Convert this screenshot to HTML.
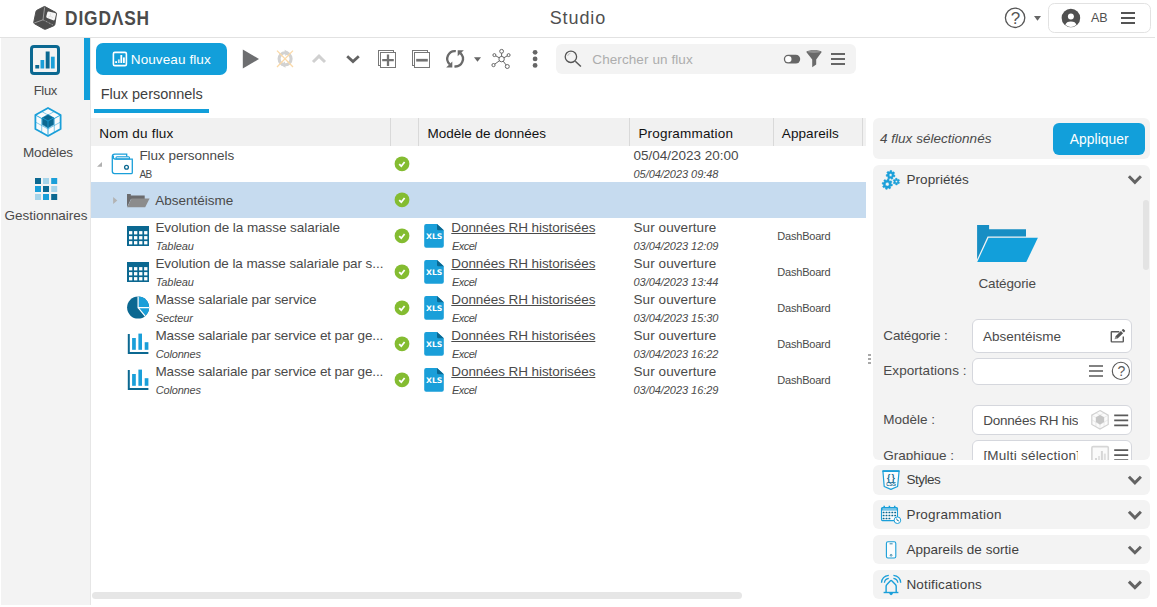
<!DOCTYPE html>
<html lang="fr"><head><meta charset="utf-8"><title>Studio</title>
<style>
*{box-sizing:border-box;margin:0;padding:0}
html,body{width:1157px;height:607px;overflow:hidden;background:#fff}
body{font-family:"Liberation Sans",sans-serif;color:#4a4a4a;font-size:13.5px;position:relative}
.abs{position:absolute}
.t,.s{position:absolute;white-space:nowrap;line-height:1;color:#4a4a4a}
.s{font-style:italic}
#topline{left:0;top:37px;width:1155px;height:1px;background:#e2e2e2}
#userbox{left:1048.4px;top:3.2px;width:102.2px;height:29.8px;border:1px solid #e2e2e2;border-radius:6.5px}
#side{left:1px;top:38px;width:90px;height:566.6px;background:#f3f3f3;border-right:1px solid #e6e6e6}
#activebar{left:84px;top:38px;width:6px;height:62px;background:#129fda}
#newbtn{left:96px;top:43px;width:131px;height:32px;border-radius:7px;background:#129fda}
#search{left:556px;top:44px;width:300px;height:30px;border-radius:6px;background:#f3f3f3}
#tabline{left:94px;top:109px;width:115px;height:4px;background:#129fda}
#thead{left:91px;top:118px;width:775px;height:28px;background:#f1f1f1}
.sep{position:absolute;top:0;width:1px;height:28px;background:#d9d9d9}
#selrow{left:91px;top:181.6px;width:775px;height:36px;background:#c6dbef}
.box{position:absolute;left:873px;width:277px;background:#f3f3f3;border-radius:6px}
#apply{left:1053px;top:123px;width:92px;height:32px;border-radius:6px;background:#129fda}
.inp{position:absolute;left:972px;width:160px;background:#fff;border:1px solid #d5d7dd;border-radius:6px}
#hscroll{left:92px;top:592px;width:649.5px;height:7.4px;border-radius:4px;background:#e6e6e6}
#vscroll{left:1143px;top:200px;width:6px;height:70px;border-radius:3px;background:#e3e3e3}
svg{position:absolute;overflow:visible}
</style></head><body>
<!-- TOP BAR -->
<div class="t" style="left:65.2px;top:7.00px;font-size:21px;letter-spacing:1.05px;font-weight:bold;color:#4b4b4b;transform-origin:0 50%;transform:scaleX(.825);">DIGDΛSH</div>
<div class="t" style="left:549.7px;top:9.00px;font-size:18px;letter-spacing:0.89px;color:#4f4f4f;">Studio</div>
<div class="t" style="left:1091px;top:12.00px;font-size:12.5px;color:#4f4f4f;">AB</div>
<div class="abs" id="topline"></div>
<div class="abs" id="userbox"></div>
<!-- SIDEBAR -->
<div class="abs" id="side"></div><div class="abs" id="activebar"></div>
<div class="t" style="left:33.7px;top:84.00px;font-size:13px;letter-spacing:-0.32px;">Flux</div>
<div class="t" style="left:23px;top:146.00px;font-size:13.5px;letter-spacing:-0.17px;">Modèles</div>
<div class="t" style="left:4.5px;top:209.00px;font-size:13.5px;letter-spacing:-0.02px;">Gestionnaires</div>
<!-- TOOLBAR -->
<div class="abs" id="newbtn"></div>
<div class="t" style="left:130.8px;top:53.00px;font-size:13.5px;letter-spacing:0.1px;color:#fff;">Nouveau flux</div>
<div class="abs" id="search"></div>
<div class="t" style="left:592.3px;top:53.00px;font-size:13.5px;letter-spacing:0.09px;color:#adadad;">Chercher un flux</div>
<div class="t" style="left:100.8px;top:87.00px;font-size:14.5px;letter-spacing:-0.03px;color:#3f3f3f;">Flux personnels</div>
<div class="abs" id="tabline"></div>
<!-- TABLE -->
<div class="abs" id="thead"><div class="sep" style="left:299px"></div><div class="sep" style="left:327px"></div><div class="sep" style="left:538px"></div><div class="sep" style="left:682px"></div><div class="sep" style="left:771px"></div></div>
<div class="t" style="left:99.3px;top:127.00px;font-size:13.5px;letter-spacing:0.2px;color:#111;">Nom du flux</div>
<div class="t" style="left:427.5px;top:127.00px;font-size:13.5px;color:#111;">Modèle de données</div>
<div class="t" style="left:638.4px;top:127.00px;font-size:13.5px;letter-spacing:0.19px;color:#111;">Programmation</div>
<div class="t" style="left:781.8px;top:127.00px;font-size:13.5px;letter-spacing:0.08px;color:#111;">Appareils</div>
<div class="abs" id="selrow"></div>
<div class="t" style="left:139.4px;top:149.00px;font-size:13.5px;letter-spacing:-0.04px;">Flux personnels</div>
<div class="t" style="left:139.4px;top:170.00px;font-size:10px;letter-spacing:-0.44px;">AB</div>
<div class="t" style="left:633.5px;top:149.00px;font-size:13.5px;letter-spacing:-0.01px;">05/04/2023 20:00</div>
<div class="s" style="left:633.5px;top:169.00px;font-size:11px;letter-spacing:-0.05px;">05/04/2023 09:48</div>
<div class="t" style="left:155.3px;top:194.00px;font-size:13.5px;letter-spacing:-0.01px;">Absentéisme</div>
<div class="t" style="left:155.4px;top:221.00px;font-size:13.5px;letter-spacing:-0.05px;">Evolution de la masse salariale</div>
<div class="s" style="left:155.7px;top:241.00px;font-size:11px;letter-spacing:-0.08px;">Tableau</div>
<div class="t" style="left:451.3px;top:221.00px;font-size:13.5px;letter-spacing:-0.07px;text-decoration:underline;">Données RH historisées</div>
<div class="s" style="left:452px;top:241.00px;font-size:11px;letter-spacing:-0.53px;">Excel</div>
<div class="t" style="left:633.5px;top:221.00px;font-size:13.5px;letter-spacing:0.08px;">Sur ouverture</div>
<div class="s" style="left:633.5px;top:241.00px;font-size:11px;letter-spacing:-0.05px;">03/04/2023 12:09</div>
<div class="t" style="left:777.3px;top:231.00px;font-size:11px;letter-spacing:-0.21px;">DashBoard</div>
<div class="t" style="left:155.4px;top:257.00px;font-size:13.5px;letter-spacing:-0.08px;">Evolution de la masse salariale par s...</div>
<div class="s" style="left:155.7px;top:277.00px;font-size:11px;letter-spacing:-0.08px;">Tableau</div>
<div class="t" style="left:451.3px;top:257.00px;font-size:13.5px;letter-spacing:-0.07px;text-decoration:underline;">Données RH historisées</div>
<div class="s" style="left:452px;top:277.00px;font-size:11px;letter-spacing:-0.53px;">Excel</div>
<div class="t" style="left:633.5px;top:257.00px;font-size:13.5px;letter-spacing:0.08px;">Sur ouverture</div>
<div class="s" style="left:633.5px;top:277.00px;font-size:11px;letter-spacing:-0.05px;">03/04/2023 13:44</div>
<div class="t" style="left:777.3px;top:267.00px;font-size:11px;letter-spacing:-0.21px;">DashBoard</div>
<div class="t" style="left:155.4px;top:293.00px;font-size:13.5px;letter-spacing:-0.09px;">Masse salariale par service</div>
<div class="s" style="left:155.7px;top:313.00px;font-size:11px;letter-spacing:-0.1px;">Secteur</div>
<div class="t" style="left:451.3px;top:293.00px;font-size:13.5px;letter-spacing:-0.07px;text-decoration:underline;">Données RH historisées</div>
<div class="s" style="left:452px;top:313.00px;font-size:11px;letter-spacing:-0.53px;">Excel</div>
<div class="t" style="left:633.5px;top:293.00px;font-size:13.5px;letter-spacing:0.08px;">Sur ouverture</div>
<div class="s" style="left:633.5px;top:313.00px;font-size:11px;letter-spacing:-0.05px;">03/04/2023 15:30</div>
<div class="t" style="left:777.3px;top:303.00px;font-size:11px;letter-spacing:-0.21px;">DashBoard</div>
<div class="t" style="left:155.4px;top:329.00px;font-size:13.5px;letter-spacing:-0.1px;">Masse salariale par service et par ge...</div>
<div class="s" style="left:155.7px;top:349.00px;font-size:11px;letter-spacing:-0.17px;">Colonnes</div>
<div class="t" style="left:451.3px;top:329.00px;font-size:13.5px;letter-spacing:-0.07px;text-decoration:underline;">Données RH historisées</div>
<div class="s" style="left:452px;top:349.00px;font-size:11px;letter-spacing:-0.53px;">Excel</div>
<div class="t" style="left:633.5px;top:329.00px;font-size:13.5px;letter-spacing:0.08px;">Sur ouverture</div>
<div class="s" style="left:633.5px;top:349.00px;font-size:11px;letter-spacing:-0.05px;">03/04/2023 16:22</div>
<div class="t" style="left:777.3px;top:339.00px;font-size:11px;letter-spacing:-0.21px;">DashBoard</div>
<div class="t" style="left:155.4px;top:365.00px;font-size:13.5px;letter-spacing:-0.1px;">Masse salariale par service et par ge...</div>
<div class="s" style="left:155.7px;top:385.00px;font-size:11px;letter-spacing:-0.17px;">Colonnes</div>
<div class="t" style="left:451.3px;top:365.00px;font-size:13.5px;letter-spacing:-0.07px;text-decoration:underline;">Données RH historisées</div>
<div class="s" style="left:452px;top:385.00px;font-size:11px;letter-spacing:-0.53px;">Excel</div>
<div class="t" style="left:633.5px;top:365.00px;font-size:13.5px;letter-spacing:0.08px;">Sur ouverture</div>
<div class="s" style="left:633.5px;top:385.00px;font-size:11px;letter-spacing:-0.05px;">03/04/2023 16:29</div>
<div class="t" style="left:777.3px;top:375.00px;font-size:11px;letter-spacing:-0.21px;">DashBoard</div>
<!-- RIGHT PANEL -->
<div class="box" style="top:118.2px;height:41.3px"></div>
<div class="t" style="left:880px;top:132.00px;font-size:13.5px;letter-spacing:0.02px;font-style:italic;">4 flux sélectionnés</div>
<div class="abs" id="apply"></div>
<div class="t" style="left:1069.7px;top:133.00px;font-size:13.8px;letter-spacing:0.09px;color:#fff;">Appliquer</div>
<div class="box" style="top:165.2px;height:294.6px"></div>
<div class="abs" id="vscroll"></div>
<div class="t" style="left:906.4px;top:173.00px;font-size:13.5px;letter-spacing:0.1px;color:#3f3f3f;">Propriétés</div>
<div class="t" style="left:978.5px;top:277.00px;font-size:13.5px;letter-spacing:-0.13px;">Catégorie</div>
<div class="inp" style="top:319px;height:34px"></div>
<div class="inp" style="top:358px;height:27px"></div>
<div class="inp" style="top:405px;height:30px"></div>
<div class="abs" style="left:972px;top:440px;width:160px;height:19.8px;overflow:hidden"><div class="inp" style="left:0;top:0.4px;height:30px"></div></div>
<div class="t" style="left:883.3px;top:329.00px;font-size:13.5px;letter-spacing:-0.16px;">Catégorie :</div>
<div class="t" style="left:883.3px;top:364.00px;font-size:13.5px;letter-spacing:0.05px;">Exportations :</div>
<div class="t" style="left:883.3px;top:413.00px;font-size:13.5px;">Modèle :</div>
<div class="abs" style="left:873px;top:440px;width:277px;height:19.8px;overflow:hidden"><div class="t" style="left:10.3px;top:9.00px;font-size:13.5px;letter-spacing:0.01px;">Graphique :</div></div>
<div class="abs" style="left:980px;top:440px;width:98.4px;height:19.8px;overflow:hidden"><div class="t" style="left:3.4px;top:9.00px;font-size:13.5px;letter-spacing:0.22px;">[Multi sélection]</div></div>
<div class="t" style="left:983px;top:330.00px;font-size:13.5px;letter-spacing:-0.01px;">Absentéisme</div>
<div class="abs" style="left:980px;top:406px;width:98.4px;height:28px;overflow:hidden"><div class="t" style="left:3.3px;top:8.00px;font-size:13.5px;letter-spacing:-0.24px;">Données RH historisées</div></div>
<div class="box" style="top:465.2px;height:29.4px"></div>
<div class="t" style="left:906.4px;top:473.00px;font-size:13.5px;letter-spacing:-0.49px;color:#3f3f3f;">Styles</div>
<div class="box" style="top:500.1px;height:29.4px"></div>
<div class="t" style="left:906.4px;top:508.00px;font-size:13.5px;letter-spacing:0.23px;color:#3f3f3f;">Programmation</div>
<div class="box" style="top:535px;height:29.4px"></div>
<div class="t" style="left:906.4px;top:543.00px;font-size:13.5px;letter-spacing:0.04px;color:#3f3f3f;">Appareils de sortie</div>
<div class="box" style="top:569.9px;height:29.4px"></div>
<div class="t" style="left:906.4px;top:578.00px;font-size:13.5px;letter-spacing:0.16px;color:#3f3f3f;">Notifications</div>
<div class="abs" id="hscroll"></div>
<div class="abs" style="left:868.4px;top:353.9px;width:2.2px;height:2.1px;background:#a8a8a8;box-shadow:0 4px 0 #a8a8a8,0 8px 0 #a8a8a8"></div>
<svg style="left:92px;top:146px" width="780" height="260" viewBox="92 146 780 260"><path d="M97 166.8 H102 V162Z" fill="#b0b0b0"/><path d="M116 159 V157.7 Q116 156.7 117 156.7 H128.5 Q129.5 156.7 129.5 157.7 V159Z" fill="#bfe2f4" stroke="#1a9fd9" stroke-width="1.1"/><path d="M116.6 157.3 H128.9" stroke="#fff" stroke-width=".5" opacity=".6"/><path d="M132.3 159.2 V172.4 Q132.3 173.6 131.1 173.6 H114.6 Q112.3 173.6 112.3 171.3 V156.7 Q112.3 154.2 114.8 154.2 H126.7 V156.4" fill="none" stroke="#1a9fd9" stroke-width="1.3"/><path d="M113.5 155.6 Q112.7 158.9 115.2 159.2 H132.9" fill="none" stroke="#1a9fd9" stroke-width="1.3"/><circle cx="126.5" cy="167.2" r="1.9" fill="#fff" stroke="#0b6891" stroke-width="1.3"/><path d="M113.1 197 V203.9 L117.3 200.4Z" fill="#b3b3b3"/><path d="M127 193.9 H130.8 V195.5 H144.7 V199 H131 L127 207.3Z" fill="#6b6b6d"/><path d="M131.5 198.6 H149.6 L145.2 207.3 H127.2Z" fill="#8c8c8c"/><circle cx="402" cy="163.8" r="7.4" fill="#84bc31"/><path d="M399.2 164.1 L401.3 166.2 L404.6 162.0" fill="none" stroke="#fff" stroke-width="1.8"/><circle cx="402" cy="199.8" r="7.4" fill="#84bc31"/><path d="M399.2 200.1 L401.3 202.2 L404.6 198.0" fill="none" stroke="#fff" stroke-width="1.8"/><circle cx="402" cy="235.8" r="7.4" fill="#84bc31"/><path d="M399.2 236.1 L401.3 238.2 L404.6 234.0" fill="none" stroke="#fff" stroke-width="1.8"/><path d="M426.2 224.1 H437 L443.8 230.29999999999998 V245.79999999999998 Q443.8 247.79999999999998 441.8 247.79999999999998 H426.2 Q424.2 247.79999999999998 424.2 245.79999999999998 V226.1 Q424.2 224.1 426.2 224.1Z" fill="#1a9fd9"/><path d="M437 224.1 L443.8 230.29999999999998 H438.4 Q437 230.29999999999998 437 228.9Z" fill="#0b6891"/><text x="434.2" y="239.2" text-anchor="middle" font-family="DejaVu Sans, Liberation Sans, sans-serif" font-weight="bold" font-size="7.7" fill="#fff">XLS</text><rect x="127" y="226" width="22" height="20" fill="#0b6891"/><rect x="129.0" y="231.1" width="3.3" height="3.3" fill="#fff"/><rect x="134.0" y="231.1" width="3.3" height="3.3" fill="#fff"/><rect x="139.1" y="231.1" width="3.3" height="3.3" fill="#fff"/><rect x="144.1" y="231.1" width="3.3" height="3.3" fill="#fff"/><rect x="129.0" y="236.1" width="3.3" height="3.3" fill="#fff"/><rect x="134.0" y="236.1" width="3.3" height="3.3" fill="#fff"/><rect x="139.1" y="236.1" width="3.3" height="3.3" fill="#fff"/><rect x="144.1" y="236.1" width="3.3" height="3.3" fill="#fff"/><rect x="129.0" y="241.1" width="3.3" height="3.3" fill="#fff"/><rect x="134.0" y="241.1" width="3.3" height="3.3" fill="#fff"/><rect x="139.1" y="241.1" width="3.3" height="3.3" fill="#fff"/><rect x="144.1" y="241.1" width="3.3" height="3.3" fill="#fff"/><circle cx="402" cy="271.8" r="7.4" fill="#84bc31"/><path d="M399.2 272.1 L401.3 274.2 L404.6 270.0" fill="none" stroke="#fff" stroke-width="1.8"/><path d="M426.2 260.1 H437 L443.8 266.3 V281.8 Q443.8 283.8 441.8 283.8 H426.2 Q424.2 283.8 424.2 281.8 V262.1 Q424.2 260.1 426.2 260.1Z" fill="#1a9fd9"/><path d="M437 260.1 L443.8 266.3 H438.4 Q437 266.3 437 264.9Z" fill="#0b6891"/><text x="434.2" y="275.2" text-anchor="middle" font-family="DejaVu Sans, Liberation Sans, sans-serif" font-weight="bold" font-size="7.7" fill="#fff">XLS</text><rect x="127" y="262" width="22" height="20" fill="#0b6891"/><rect x="129.0" y="267.1" width="3.3" height="3.3" fill="#fff"/><rect x="134.0" y="267.1" width="3.3" height="3.3" fill="#fff"/><rect x="139.1" y="267.1" width="3.3" height="3.3" fill="#fff"/><rect x="144.1" y="267.1" width="3.3" height="3.3" fill="#fff"/><rect x="129.0" y="272.1" width="3.3" height="3.3" fill="#fff"/><rect x="134.0" y="272.1" width="3.3" height="3.3" fill="#fff"/><rect x="139.1" y="272.1" width="3.3" height="3.3" fill="#fff"/><rect x="144.1" y="272.1" width="3.3" height="3.3" fill="#fff"/><rect x="129.0" y="277.1" width="3.3" height="3.3" fill="#fff"/><rect x="134.0" y="277.1" width="3.3" height="3.3" fill="#fff"/><rect x="139.1" y="277.1" width="3.3" height="3.3" fill="#fff"/><rect x="144.1" y="277.1" width="3.3" height="3.3" fill="#fff"/><circle cx="402" cy="307.8" r="7.4" fill="#84bc31"/><path d="M399.2 308.1 L401.3 310.2 L404.6 306.0" fill="none" stroke="#fff" stroke-width="1.8"/><path d="M426.2 296.1 H437 L443.8 302.3 V317.8 Q443.8 319.8 441.8 319.8 H426.2 Q424.2 319.8 424.2 317.8 V298.1 Q424.2 296.1 426.2 296.1Z" fill="#1a9fd9"/><path d="M437 296.1 L443.8 302.3 H438.4 Q437 302.3 437 300.90000000000003Z" fill="#0b6891"/><text x="434.2" y="311.2" text-anchor="middle" font-family="DejaVu Sans, Liberation Sans, sans-serif" font-weight="bold" font-size="7.7" fill="#fff">XLS</text><circle cx="138.1" cy="307.6" r="11" fill="#0b6891"/><path d="M138.1 307.6 V296.6 A11 11 0 0 1 145.17 316.03Z" fill="#1a9fd9"/><path d="M138.1 296.6 V307.6 H149.1 M138.1 307.6 L145.17 316.03" stroke="#fff" stroke-width="1.2" fill="none"/><circle cx="402" cy="343.8" r="7.4" fill="#84bc31"/><path d="M399.2 344.1 L401.3 346.2 L404.6 342.0" fill="none" stroke="#fff" stroke-width="1.8"/><path d="M426.2 332.1 H437 L443.8 338.3 V353.8 Q443.8 355.8 441.8 355.8 H426.2 Q424.2 355.8 424.2 353.8 V334.1 Q424.2 332.1 426.2 332.1Z" fill="#1a9fd9"/><path d="M437 332.1 L443.8 338.3 H438.4 Q437 338.3 437 336.90000000000003Z" fill="#0b6891"/><text x="434.2" y="347.2" text-anchor="middle" font-family="DejaVu Sans, Liberation Sans, sans-serif" font-weight="bold" font-size="7.7" fill="#fff">XLS</text><path d="M128.8 334 V353 H148.4" fill="none" stroke="#0b6891" stroke-width="2"/><rect x="132.1" y="338" width="3.7" height="11.8" fill="#1a9fd9"/><rect x="138.4" y="333.6" width="3.6" height="16.2" fill="#1a9fd9"/><rect x="144.7" y="342.2" width="3.7" height="7.6" fill="#1a9fd9"/><circle cx="402" cy="379.8" r="7.4" fill="#84bc31"/><path d="M399.2 380.1 L401.3 382.2 L404.6 378.0" fill="none" stroke="#fff" stroke-width="1.8"/><path d="M426.2 368.1 H437 L443.8 374.3 V389.8 Q443.8 391.8 441.8 391.8 H426.2 Q424.2 391.8 424.2 389.8 V370.1 Q424.2 368.1 426.2 368.1Z" fill="#1a9fd9"/><path d="M437 368.1 L443.8 374.3 H438.4 Q437 374.3 437 372.90000000000003Z" fill="#0b6891"/><text x="434.2" y="383.2" text-anchor="middle" font-family="DejaVu Sans, Liberation Sans, sans-serif" font-weight="bold" font-size="7.7" fill="#fff">XLS</text><path d="M128.8 370 V389 H148.4" fill="none" stroke="#0b6891" stroke-width="2"/><rect x="132.1" y="374" width="3.7" height="11.8" fill="#1a9fd9"/><rect x="138.4" y="369.6" width="3.6" height="16.2" fill="#1a9fd9"/><rect x="144.7" y="378.2" width="3.7" height="7.6" fill="#1a9fd9"/></svg>
<!-- ICONS: top bar -->
<svg style="left:0;top:0" width="160" height="37" viewBox="0 0 160 37">
 <path d="M44.9 6.2 L56.3 12.4 Q57 12.9 56.8 13.8 L55.2 24.6 Q55 25.5 54.3 25.9 L45.8 29.5 Q44.9 29.8 44 29.4 L34 23.8 Q33.2 23.2 33.4 22.3 L35.7 11.2 Q35.9 10.4 36.7 10 L43.9 6.3 Q44.4 6 44.9 6.2Z" fill="#4d4d4d" stroke="#4d4d4d" stroke-width="1" stroke-linejoin="round" transform="translate(45 18) scale(.97) translate(-45 -18)"/>
 <path d="M48.8 11.5 L55 12.9 Q56.3 13.3 56 14.6 L54.8 19.4 Q54.4 20.7 53.1 20.3 L47.2 18 Q45.9 17.5 46.3 16.2 L47.3 12.6 Q47.6 11.3 48.8 11.5Z" fill="#f6f6f6"/>
 <path d="M44.6 7.4 L43 19.8 L34.2 23" fill="none" stroke="#bdbdbd" stroke-width=".7"/>
 <path d="M43 19.8 L53 25" fill="none" stroke="#bdbdbd" stroke-width=".8" stroke-dasharray="1 .7"/>
 <path d="M50.5 13.2 L50.2 16.2 L48 17.3 M50.2 16.2 L53 17.6" fill="none" stroke="#cfcfcf" stroke-width=".5"/>
</svg>
<!-- help / user -->
<svg style="left:1000px;top:0" width="157" height="37" viewBox="1000 0 157 37">
 <circle cx="1015.1" cy="17.8" r="9.7" fill="none" stroke="#555" stroke-width="1.3"/>
 <path d="M1034 16 H1041 L1037.5 20.7Z" fill="#666"/>
 <circle cx="1070.9" cy="18" r="9.3" fill="#505050"/>
 <circle cx="1070.9" cy="16.6" r="3" fill="#fff"/>
 <path d="M1065.4 24.8 Q1066.2 21.4 1070.9 21.4 Q1075.6 21.4 1076.4 24.8 Q1074 27 1070.9 27 Q1067.8 27 1065.4 24.8Z" fill="#fff"/>
 <path d="M1121 13 h14 M1121 18 h14 M1121 23 h14" stroke="#545454" stroke-width="2"/>
</svg>
<!-- sidebar icons -->
<svg style="left:0;top:38px" width="92" height="170" viewBox="0 38 92 170">
 <rect x="31.5" y="46.5" width="27" height="27" rx="2.5" fill="none" stroke="#0b6891" stroke-width="3"/>
 <rect x="35.3" y="65" width="3.9" height="3.5" fill="#0b6891"/>
 <rect x="40.5" y="60" width="3.7" height="8.5" fill="#1a9fd9"/>
 <rect x="45.7" y="51.5" width="3.9" height="17" fill="#0b6891"/>
 <rect x="50.9" y="56.7" width="3.8" height="11.8" fill="#1a9fd9"/>
 <!-- modeles cube -->
 <g stroke="#1a9fd9" fill="none">
  <path d="M48 108 L60.6 115 V129 L48 136 L35.4 129 V115Z" fill="#f9fafb" stroke-width="1.8" stroke-linejoin="round"/>
  <path d="M48 122 V136 M35.4 115 L48 122 L60.6 115" stroke-width=".9"/>
  <path d="M41.7 111.5 L54.3 118.5 V132.5 M54.3 111.5 L41.7 118.5 V132.5 M35.4 122 L48 129 L60.6 122" stroke-width=".7" opacity=".75"/>
 </g>
 <path d="M48 114.6 L53.8 117.8 V124.6 L48 128 L42.2 124.6 V117.8Z" fill="#0b6891"/>
 <path d="M42.2 117.8 L48 121 L53.8 117.8 M48 121 V128" stroke="#1a9fd9" stroke-width=".8" fill="none"/><path d="M48 114.6 L53.8 117.8 V124.6 L48 128 L42.2 124.6 V117.8Z" fill="none" stroke="#1788bd" stroke-width=".6"/>
 <!-- gestionnaires grid -->
 <rect x="35" y="178" width="6" height="6" fill="#0b6891"/><rect x="43" y="178" width="6" height="6" fill="#a5d4ea"/><rect x="51.2" y="178" width="6" height="6" fill="#1a9fd9"/>
 <rect x="35" y="186" width="6" height="6" fill="#1a9fd9"/><rect x="43" y="186" width="6" height="6" fill="#0b6891"/><rect x="51.2" y="186" width="6" height="6" fill="#a5d4ea"/>
 <rect x="35" y="194" width="6" height="6" fill="#a5d4ea"/><rect x="43" y="194" width="6" height="6" fill="#1a9fd9"/><rect x="51.2" y="194" width="6" height="6" fill="#0b6891"/>
</svg>
<!-- toolbar icons -->
<svg style="left:92px;top:38px" width="780" height="42" viewBox="92 38 780 42">
 <!-- new flux button icon -->
 <rect x="113.4" y="52.4" width="13" height="13.2" rx="1.4" fill="none" stroke="#fff" stroke-width="1.6"/>
 <rect x="115.2" y="61.2" width="1.8" height="1.8" fill="#fff"/>
 <rect x="117.9" y="59.4" width="1.8" height="3.6" fill="#d4ecf8"/>
 <rect x="120.4" y="55" width="1.8" height="8" fill="#fff"/>
 <rect x="123" y="57.4" width="1.8" height="5.6" fill="#fff"/>
 <!-- play -->
 <path d="M242.8 49.6 V68.4 L259 59Z" fill="#6d6e70"/>
 <!-- disabled refresh -->
 <circle cx="285.1" cy="58.8" r="6" fill="none" stroke="#d2d2d2" stroke-width="3.1"/>
 <path d="M284.6 49.8 L289.6 52.6 L285.4 56Z M285.6 67.8 L280.6 65 L284.8 61.6Z" fill="#d2d2d2"/>
 <path d="M277 50.6 L293 67 M293 50.6 L277 67" stroke="#fbd9a7" stroke-width="1.3" fill="none"/>
 <!-- up chevron (disabled) -->
 <path d="M313 62 L319 56.2 L325 62" fill="none" stroke="#d0d0d0" stroke-width="3"/>
 <!-- down chevron -->
 <path d="M347.2 56.2 L353 61.6 L358.8 56.2" fill="none" stroke="#636363" stroke-width="2.8"/>
 <!-- expand all -->
 <g fill="#fff" stroke="#777" stroke-width="1">
  <rect x="378.5" y="50.5" width="15" height="15"/><rect x="380.5" y="52.5" width="15" height="15"/>
  <rect x="412.5" y="50.5" width="15" height="15"/><rect x="414.5" y="52.5" width="15" height="15"/>
 </g>
 <path d="M382.2 60.2 H393.8 M388 54.4 V66" stroke="#727272" stroke-width="2.3" fill="none"/>
 <path d="M416.2 60.2 H427.8" stroke="#727272" stroke-width="2.7" fill="none"/>
 <!-- sync -->
 <g fill="none" stroke="#6a6a6a" stroke-width="2.3">
  <path d="M455.8 51.2 A7.6 7.6 0 0 0 449.8 64.4"/>
  <path d="M454.4 66.4 A7.6 7.6 0 0 0 460.4 53.2"/>
 </g>
 <path d="M452.3 61.4 V67.4 H446.2Z" fill="#6a6a6a"/>
 <path d="M457.7 56.2 V50.3 H463.8Z" fill="#6a6a6a"/>
 <path d="M474 57.2 H481 L477.5 61.8Z" fill="#666"/>
 <!-- network -->
 <g stroke="#666" stroke-width="1" fill="#fff">
  <path d="M501.6 59.1 L501.6 51.3 M501.6 59.1 L494.4 55.1 M501.6 59.1 L508.6 55.1 M501.6 59.1 L493.5 65.1 M501.6 59.1 L507.3 66.5" fill="none"/>
  <circle cx="501.6" cy="59.1" r="2.7"/><circle cx="501.6" cy="51.3" r="1.9"/><circle cx="494.4" cy="55.1" r="1.5"/>
  <circle cx="508.6" cy="55.1" r="1.5"/><circle cx="493.5" cy="65.1" r="1.6"/><circle cx="507.3" cy="66.5" r="2"/>
 </g>
 <!-- dots -->
 <circle cx="535.1" cy="52.3" r="2.4" fill="#666"/><circle cx="535.1" cy="58.9" r="2.4" fill="#666"/><circle cx="535.1" cy="65.4" r="2.4" fill="#666"/>
 <!-- search icons -->
 <circle cx="570.9" cy="56.8" r="5.7" fill="none" stroke="#555" stroke-width="1.3"/>
 <path d="M575.3 61.2 L580.9 66.5" stroke="#555" stroke-width="1.5" fill="none"/>
 <path d="M567.6 56 A3.6 3.6 0 0 1 570.4 53.3" stroke="#aaa" stroke-width=".7" fill="none"/>
 <rect x="783.8" y="54.8" width="16.4" height="8.6" rx="4.3" fill="#666"/>
 <circle cx="788.3" cy="59.1" r="3.2" fill="#fff"/>
 <path d="M806.3 52 C806.3 49.6 821.7 49.6 821.7 52 L816.2 59.6 V64.6 L812.2 67.2 V59.6Z" fill="#6a6a6a"/>
 <ellipse cx="814" cy="51.8" rx="6.6" ry="1.1" fill="#909090"/>
 <path d="M831 54 H845 M831 59 H845 M831 64 H845" stroke="#666" stroke-width="2" fill="none"/>
</svg>
<!-- right panel icons -->
<svg style="left:873px;top:118px" width="284" height="489" viewBox="873 118 284 489">
<path d="M893.90 174.82 L895.07 175.44 L894.59 176.98 L893.28 176.83 L892.72 177.43 L892.96 178.73 L891.47 179.32 L890.77 178.20 L889.94 178.13 L889.08 179.14 L887.69 178.33 L888.13 177.08 L887.66 176.40 L886.34 176.35 L886.10 174.76 L887.35 174.33 L887.59 173.54 L886.81 172.47 L887.90 171.30 L889.02 172.00 L889.79 171.70 L890.13 170.42 L891.74 170.55 L891.88 171.86 L892.60 172.27 L893.81 171.74 L894.71 173.07 L893.78 174.01Z M892.10 174.90 A1.5 1.5 0 1 0 889.10 174.90 A1.5 1.5 0 1 0 892.10 174.90Z" fill="#1a9fd9" fill-rule="evenodd" stroke="#1a9fd9" stroke-width=".5" stroke-linejoin="round"/><path d="M891.19 183.88 L892.50 184.42 L892.17 186.02 L890.75 186.01 L890.28 186.72 L890.82 188.03 L889.46 188.93 L888.46 187.92 L887.62 188.09 L887.08 189.40 L885.48 189.07 L885.49 187.65 L884.78 187.18 L883.47 187.72 L882.57 186.36 L883.58 185.36 L883.41 184.52 L882.10 183.98 L882.43 182.38 L883.85 182.39 L884.32 181.68 L883.78 180.37 L885.14 179.47 L886.14 180.48 L886.98 180.31 L887.52 179.00 L889.12 179.33 L889.11 180.75 L889.82 181.22 L891.13 180.68 L892.03 182.04 L891.02 183.04Z M889.20 184.20 A1.9 1.9 0 1 0 885.40 184.20 A1.9 1.9 0 1 0 889.20 184.20Z" fill="#1a9fd9" fill-rule="evenodd" stroke="#1a9fd9" stroke-width=".5" stroke-linejoin="round"/><path d="M898.78 181.89 L899.66 182.57 L898.98 183.81 L897.93 183.45 L897.34 183.81 L897.19 184.91 L895.77 184.94 L895.57 183.85 L894.95 183.52 L893.93 183.93 L893.19 182.73 L894.03 182.01 L894.02 181.31 L893.14 180.63 L893.82 179.39 L894.87 179.75 L895.46 179.39 L895.61 178.29 L897.03 178.26 L897.23 179.35 L897.85 179.68 L898.87 179.27 L899.61 180.47 L898.77 181.19Z M897.55 181.60 A1.15 1.15 0 1 0 895.25 181.60 A1.15 1.15 0 1 0 897.55 181.60Z" fill="#1a9fd9" fill-rule="evenodd" stroke="#1a9fd9" stroke-width=".5" stroke-linejoin="round"/>
<path d="M1128.9 176.3 L1134.9 182.3 L1140.9 176.3" fill="none" stroke="#636363" stroke-width="3"/><path d="M1128.9 476.8 L1134.9 482.8 L1140.9 476.8" fill="none" stroke="#636363" stroke-width="3"/><path d="M1128.9 511.8 L1134.9 517.8 L1140.9 511.8" fill="none" stroke="#636363" stroke-width="3"/><path d="M1128.9 546.7 L1134.9 552.7 L1140.9 546.7" fill="none" stroke="#636363" stroke-width="3"/><path d="M1128.9 581.6 L1134.9 587.6 L1140.9 581.6" fill="none" stroke="#636363" stroke-width="3"/>
<path d="M977.1 225.1 H989.1 V229.3 H1026 V236.6 H987.6 L977.1 259.4Z" fill="#178ec4"/>
<path d="M988.5 237.8 H1037.9 L1026.3 262 H977.2Z" fill="#129fda"/>
<path d="M1119.3 331.7 H1111.9 Q1111.3 331.7 1111.3 332.3 V341.3 Q1111.3 341.9 1111.9 341.9 H1122.7 Q1123.3 341.9 1123.3 341.3 V336.4" fill="none" stroke="#5a5a5a" stroke-width="1.4"/>
<path d="M1114.6 339.2 L1115.5 336.3 L1120.9 331 L1123.1 333.2 L1117.6 338.5Z M1121.7 330.2 L1122.9 329.1 Q1123.3 328.8 1123.7 329.2 L1125 330.5 Q1125.3 330.9 1125 331.3 L1123.9 332.4Z" fill="#555"/>
<path d="M1114.6 339.2 L1115.6 336.2 L1118 338.4Z" fill="#fff" opacity=".35"/>
<path d="M1089 366 H1103 M1089 371 H1103 M1089 376 H1103" stroke="#5a5a5a" stroke-width="1.7" fill="none"/>
<circle cx="1120.9" cy="370.9" r="8.6" fill="none" stroke="#555" stroke-width="1.1"/>
<g stroke="#d2d2d2" fill="none"><path d="M1100 410.6 L1108.2 415.2 V424.4 L1100 429 L1091.8 424.4 V415.2Z" stroke-width="1.2" fill="#fbfbfb"/><path d="M1095.9 412.9 L1104.1 417.5 V426.7 M1104.1 412.9 L1095.9 417.5 V426.7 M1091.8 419.8 L1100 424.4 L1108.2 419.8 M1100 419.8 V429 M1091.8 415.2 L1100 419.8 L1108.2 415.2" stroke-width=".5" opacity=".8"/></g><path d="M1100 415 L1104 417.3 V422 L1100 424.4 L1096 422 V417.3Z" fill="#c6c6c6"/>
<path d="M1114.2 415.3 H1128.2 M1114.2 420.3 H1128.2 M1114.2 425.3 H1128.2" stroke="#5a5a5a" stroke-width="1.7" fill="none"/>
<g clip-path="url(#cpB)"><rect x="1091.9" y="446.6" width="16.4" height="16.4" rx="1.2" fill="#fafafa" stroke="#d6d6d6" stroke-width="1.6"/><rect x="1095" y="458" width="2" height="2" fill="#d6d6d6"/><rect x="1098" y="456" width="2" height="4" fill="#e2e2e2"/><rect x="1100.9" y="451" width="2" height="9" fill="#d6d6d6"/><rect x="1103.8" y="453.6" width="2" height="6.4" fill="#dedede"/><path d="M1114.2 450.2 H1128.2 M1114.2 455.2 H1128.2 M1114.2 460.2 H1128.2" stroke="#5a5a5a" stroke-width="1.7" fill="none"/></g>
<defs><clipPath id="cpB"><rect x="873" y="440" width="277" height="20"/></clipPath></defs>
<path d="M882.9 471 H899.1 L897.6 486.5 L890.9 489.4 L884.2 486.5Z" fill="#fbfcfd" stroke="#1a9fd9" stroke-width="1.2" stroke-linejoin="round"/><path d="M882.5 471.1 H899.5" stroke="#1a9fd9" stroke-width="1.8"/><text x="891.5" y="480.6" text-anchor="middle" font-family="Liberation Sans, sans-serif" font-weight="bold" font-size="8.6" letter-spacing="1.2" fill="#0b6891">{}</text><text x="891" y="485.8" text-anchor="middle" font-family="Liberation Sans, sans-serif" font-weight="bold" font-size="4.7" fill="#0b6891">CSS</text>
<rect x="881.5" y="507.6" width="16" height="13" rx="1" fill="#fafcfd" stroke="#1a9fd9" stroke-width="1.1"/><path d="M881.5 509.2 H897.5" stroke="#1a9fd9" stroke-width="2.6" opacity=".85"/><path d="M882.8 509 H896.4" stroke="#fff" stroke-width=".6"/><path d="M884.2 505.8 V507.6 M889.4 505.8 V507.6 M894.7 505.8 V507.6" stroke="#1a9fd9" stroke-width="1.5"/><rect x="882.65" y="511.85" width="1.9" height="1.5" rx=".5" fill="#0b6891"/><rect x="885.55" y="511.85" width="1.9" height="1.5" rx=".5" fill="#0b6891"/><rect x="888.45" y="511.85" width="1.9" height="1.5" rx=".5" fill="#0b6891"/><rect x="891.35" y="511.85" width="1.9" height="1.5" rx=".5" fill="#0b6891"/><rect x="894.25" y="511.85" width="1.9" height="1.5" rx=".5" fill="#0b6891"/><rect x="882.65" y="514.85" width="1.9" height="1.5" rx=".5" fill="#0b6891"/><rect x="885.55" y="514.85" width="1.9" height="1.5" rx=".5" fill="#0b6891"/><rect x="888.45" y="514.85" width="1.9" height="1.5" rx=".5" fill="#0b6891"/><rect x="891.35" y="514.85" width="1.9" height="1.5" rx=".5" fill="#0b6891"/><rect x="894.25" y="514.85" width="1.9" height="1.5" rx=".5" fill="#0b6891"/><rect x="882.65" y="517.85" width="1.9" height="1.5" rx=".5" fill="#0b6891"/><rect x="885.55" y="517.85" width="1.9" height="1.5" rx=".5" fill="#0b6891"/><rect x="888.45" y="517.85" width="1.9" height="1.5" rx=".5" fill="#0b6891"/><circle cx="897.4" cy="520.2" r="3.3" fill="#fff" stroke="#1a9fd9" stroke-width="1"/><path d="M896.6 518.6 L897.3 520.4 L898.9 520.9" fill="none" stroke="#0b6891" stroke-width=".9"/>
<rect x="886.4" y="541.8" width="9.4" height="16.2" rx="1.6" fill="#fafcfd" stroke="#1a9fd9" stroke-width="1.1"/><path d="M889.6 543.8 H892.6" stroke="#0b6891" stroke-width=".8"/><circle cx="891.1" cy="555.3" r=".9" fill="none" stroke="#0b6891" stroke-width=".7"/>
<g fill="none" stroke="#1a9fd9" stroke-width="1.4"><path d="M883.6 592.5 H898.4"/><path d="M886.1 592.3 V586.4 Q886.1 585.3 886.9 584.5 L890.2 581 Q891.1 580.1 892 581 L895.4 584.5 Q896.2 585.3 896.2 586.4 V592.3" stroke-linejoin="round"/><path d="M881.5 582.8 Q881.9 576.2 888.8 575.4 M884.4 582.8 Q884.8 578.8 888.8 578.3 M900.7 582.8 Q900.3 576.2 893.4 575.4 M897.8 582.8 Q897.4 578.8 893.4 578.3" stroke-width="1.3"/></g><path d="M889.2 593.1 H893 Q892.6 595.2 891.1 595.2 Q889.6 595.2 889.2 593.1Z" fill="#1a9fd9"/>
</svg>

<div class="t" style="left:1010.7px;top:10.00px;font-size:17px;color:#555;">?</div>
<div class="t" style="left:1117.4px;top:364.00px;font-size:14px;color:#5c5c5c;">?</div>
</body></html>
